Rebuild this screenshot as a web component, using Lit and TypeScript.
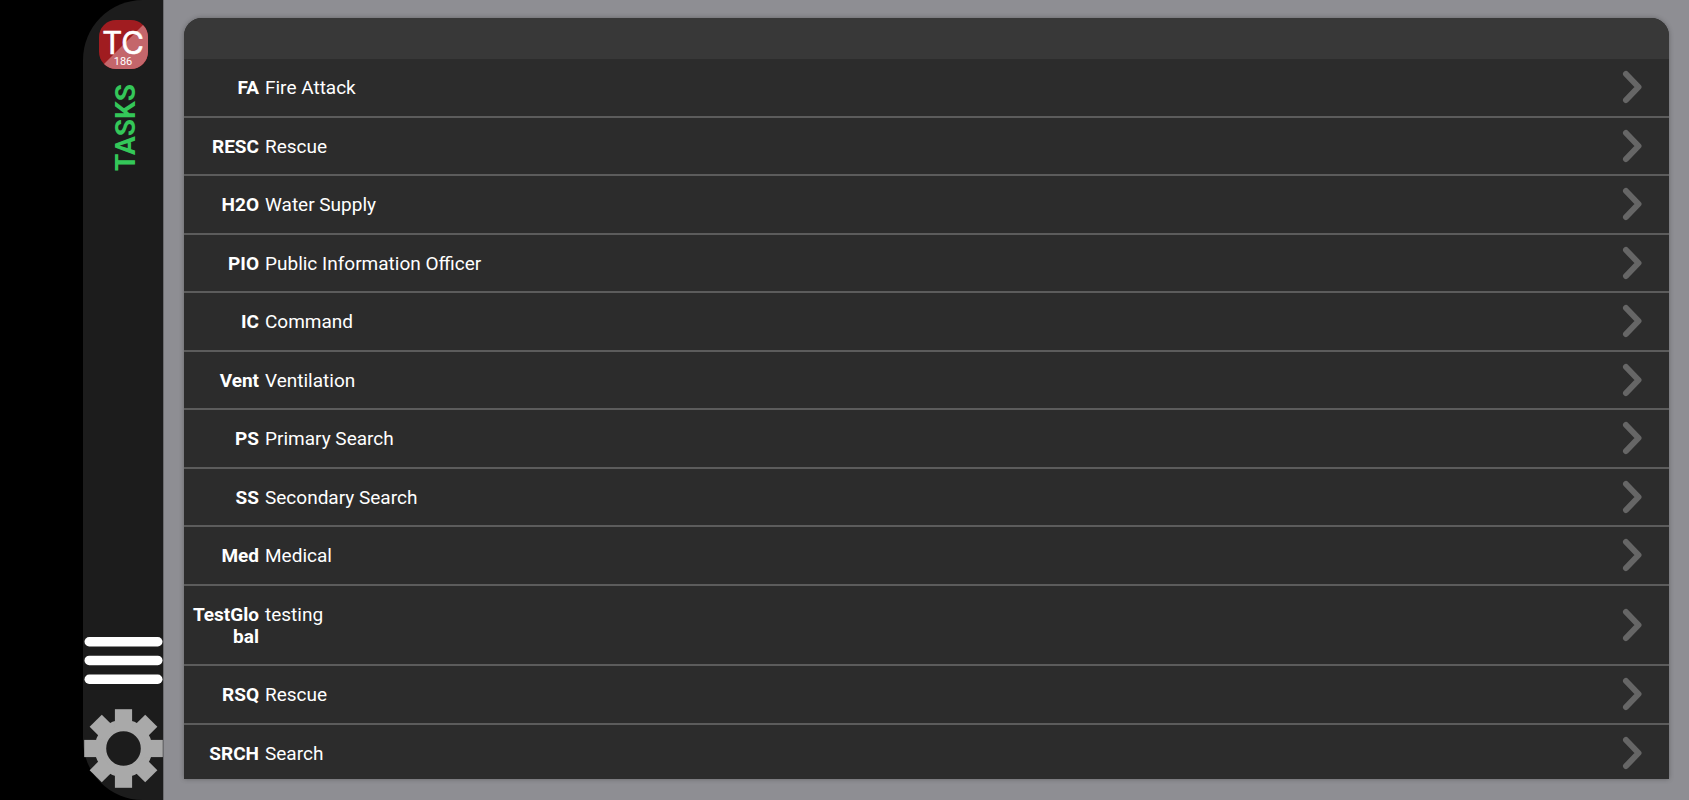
import { LitElement, html, svg, css } from "lit";
import { customElement, property, state } from "lit/decorators.js";

interface Task {
  code: string;
  name: string;
}

const toothAt = (angle: number) =>
  svg`<rect x="-8.6" y="-39.3" width="17.2" height="18" fill="#a9a9a9" transform="rotate(${angle})" />`;

@customElement("tc-logo")
export class TcLogo extends LitElement {
  static styles = css`
    :host {
      display: block;
    }
    .mark {
      display: block;
      width: 49px;
      height: 49px;
    }
    .letters {
      font: 400 31px Inter, sans-serif;
      fill: #fff;
      stroke: #fff;
      stroke-width: 0.6px;
      stroke-linejoin: round;
    }
    .number {
      font: 400 11px Roboto, sans-serif;
      fill: #fff;
    }
  `;

  render() {
    return html`
      <svg class="mark" viewBox="0 0 49 49" role="img" aria-label="TC 186">
        <defs>
          <clipPath id="badge"><rect width="49" height="49" rx="17" /></clipPath>
        </defs>
        <g clip-path="url(#badge)">
          <rect width="49" height="49" fill="#a01c20" />
          <path d="M49 0 V49 H0 Z" fill="#c4666b" />
        </g>
        <text class="letters" x="24" y="34" text-anchor="middle">TC</text>
        <text class="number" x="24" y="45" text-anchor="middle">186</text>
      </svg>
    `;
  }
}

@customElement("side-rail")
export class SideRail extends LitElement {
  static styles = css`
    :host {
      display: flex;
      flex-direction: column;
      align-items: center;
      box-sizing: border-box;
      width: 80px;
      padding: 20px 0 12px;
      border-radius: 60px 0 0 60px;
      background: #1c1c1c;
    }
    .tab {
      margin: 15px 0 0 5px;
      padding: 0;
      border: 0;
      background: none;
      color: #34c759;
      font: 700 28px/32px Roboto, sans-serif;
      writing-mode: vertical-rl;
      transform: rotate(180deg);
      cursor: pointer;
    }
    .tools {
      display: flex;
      flex-direction: column;
      gap: 25px;
      margin-top: auto;
    }
    .tool {
      display: block;
      padding: 0;
      border: 0;
      background: none;
      cursor: pointer;
    }
    .icon {
      display: block;
      width: 79px;
    }
  `;

  render() {
    const teeth = [0, 45, 90, 135, 180, 225, 270, 315];
    return html`
      <tc-logo></tc-logo>
      <button class="tab" type="button">TASKS</button>
      <div class="tools">
        <button class="tool" type="button" aria-label="Menu">
          <svg class="icon" viewBox="0 0 79 47" fill="#fff">
            <rect x="0.5" y="0" width="78" height="9.5" rx="4.7" />
            <rect x="0.5" y="18.7" width="78" height="9.5" rx="4.7" />
            <rect x="0.5" y="37.5" width="78" height="9.5" rx="4.7" />
          </svg>
        </button>
        <button class="tool" type="button" aria-label="Settings">
          <svg class="icon" viewBox="-39.5 -39.5 79 79">
            <circle r="23" fill="none" stroke="#a9a9a9" stroke-width="11.4" />
            ${teeth.map((a) => toothAt(a))}
          </svg>
        </button>
      </div>
    `;
  }
}

@customElement("task-row")
export class TaskRow extends LitElement {
  static styles = css`
    :host {
      display: flex;
    }
    .row {
      display: flex;
      flex: 1;
      align-items: center;
      box-sizing: border-box;
      padding: 0 25px 0 8px;
      border: 0;
      border-bottom: 2px solid #5c5c5c;
      background: #2c2c2c;
      color: #fff;
      font: 400 19px/22px Roboto, sans-serif;
      text-align: left;
      cursor: pointer;
    }
    .text {
      display: flex;
      flex: 1;
      gap: 6px;
      padding: 18px 0 16px;
    }
    .code {
      width: 67px;
      font-weight: 700;
      text-align: right;
      word-break: break-all;
    }
    .name {
      flex: 1;
    }
    .chevron {
      display: block;
      width: 24px;
      height: 36px;
    }
  `;

  @property() code = "";
  @property() name = "";

  render() {
    return html`
      <button class="row" type="button">
        <span class="text">
          <span class="code">${this.code}</span>
          <span class="name">${this.name}</span>
        </span>
        <svg class="chevron" viewBox="0 0 24 36" aria-hidden="true">
          <path
            d="M6 5 L18.5 18 L6 31"
            fill="none"
            stroke="#666"
            stroke-width="6"
            stroke-linecap="round"
            stroke-linejoin="round"
          />
        </svg>
      </button>
    `;
  }
}

@customElement("app-root")
export class AppRoot extends LitElement {
  static styles = css`
    :host {
      display: flex;
      box-sizing: border-box;
      height: 100vh;
      padding-left: 83px;
      background: #000;
    }
    .main {
      display: flex;
      flex: 1;
      box-sizing: border-box;
      min-width: 0;
      padding: 18px 20px 21px;
      border-left: 1px solid #6c6c70;
      background: #8e8e93;
    }
    .card {
      display: flex;
      flex: 1;
      flex-direction: column;
      overflow: hidden;
      border-radius: 18px 18px 0 0;
      background: #2c2c2c;
      box-shadow: 0 0 5px rgba(0, 0, 0, 0.3);
    }
    .head {
      flex: none;
      height: 41px;
      background: #383838;
    }
    .scroller {
      flex: 1;
      min-height: 0;
      overflow-y: auto;
      scrollbar-width: none;
    }
    .list {
      display: flex;
      flex-direction: column;
      box-sizing: border-box;
      min-height: calc(100% + 4px);
      margin: 0;
      padding: 0;
      list-style: none;
    }
    .item {
      display: grid;
      flex: 1 0 auto;
    }
  `;

  @state() private tasks: Task[] = [
    { code: "FA", name: "Fire Attack" },
    { code: "RESC", name: "Rescue" },
    { code: "H2O", name: "Water Supply" },
    { code: "PIO", name: "Public Information Officer" },
    { code: "IC", name: "Command" },
    { code: "Vent", name: "Ventilation" },
    { code: "PS", name: "Primary Search" },
    { code: "SS", name: "Secondary Search" },
    { code: "Med", name: "Medical" },
    { code: "TestGlobal", name: "testing" },
    { code: "RSQ", name: "Rescue" },
    { code: "SRCH", name: "Search" },
  ];

  render() {
    return html`
      <side-rail></side-rail>
      <main class="main">
        <section class="card" aria-label="Tasks">
          <header class="head"></header>
          <div class="scroller">
            <ul class="list">
              ${this.tasks.map(
                (t) => html`<li class="item"><task-row .code=${t.code} .name=${t.name}></task-row></li>`
              )}
            </ul>
          </div>
        </section>
      </main>
    `;
  }
}
